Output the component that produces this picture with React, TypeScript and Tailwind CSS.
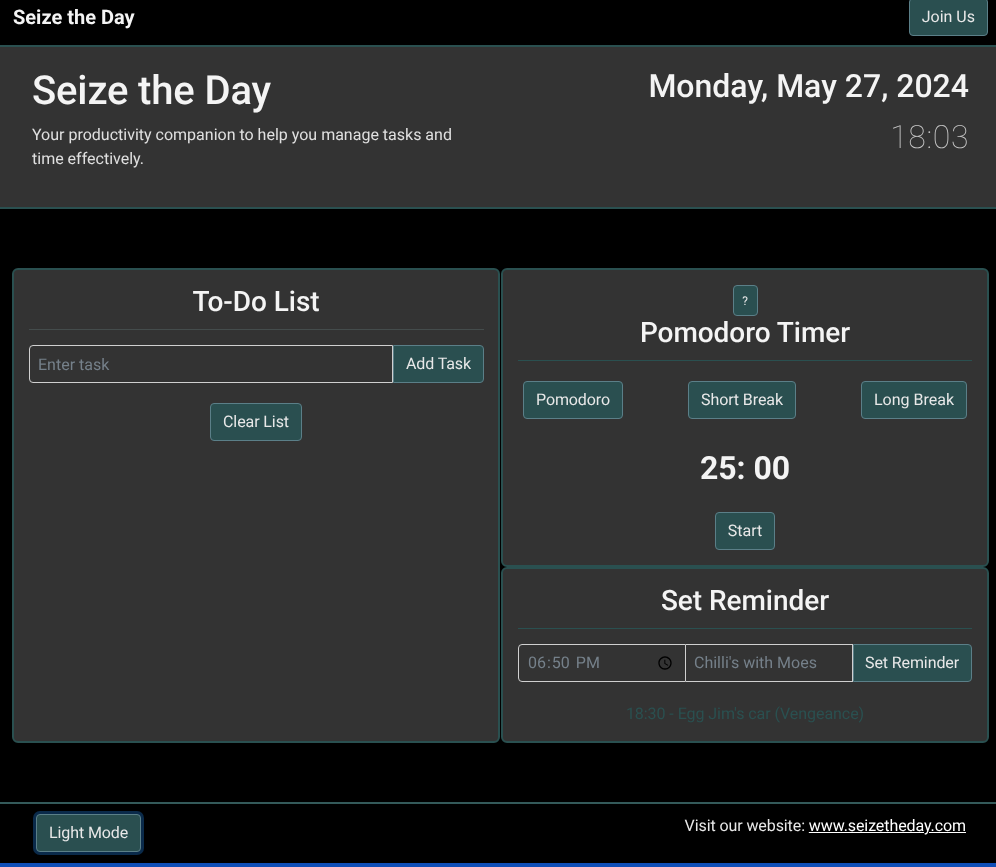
const btnCore =
  'h-[38px] shrink-0 whitespace-nowrap rounded-[4px] border border-[#5b7f88] bg-[#2a4f50] text-base leading-6 text-[#e8e8e8] antialiased [text-rendering:geometricPrecision]'
const btnBase = `${btnCore} px-3`
const btn = `${btnBase} tracking-[-0.1px]`
const field =
  'h-[38px] min-w-0 border border-[#d0d0d0] bg-[#333333] px-2 text-base text-[#75808a] outline-none placeholder:text-[#75808a] antialiased [text-rendering:geometricPrecision]'
const card = 'rounded-[6px] border-2 border-[#2a5050] bg-[#333333] px-[15px]'
const title = 'text-center text-[28px] leading-[34px] font-medium tracking-[-0.05px] text-[#f4f4f4]'

export default function App() {
  return (
    <div className="flex h-[867px] flex-col overflow-hidden bg-black font-['Roboto',sans-serif] text-[#e8e8e8] antialiased will-change-transform [text-rendering:geometricPrecision]">
      <nav className="flex h-[45px] shrink-0 items-start justify-between pr-2 pl-[13px]">
        <span className="mt-[5px] text-xl leading-6 font-bold text-[#f4f4f4]">Seize the Day</span>
        <button className={`${btnBase} -mt-[2px]`}>Join Us</button>
      </nav>

      <header className="flex h-[164px] shrink-0 justify-between border-y-2 border-[#2a5050] bg-[#333333] pr-[27px] pl-8">
        <div className="w-[440px]">
          <h1 className="mt-5 text-[40px] leading-[48px] font-medium tracking-[-0.15px] text-[#f4f4f4]">Seize the Day</h1>
          <p className="mt-2 text-base leading-6 text-[#e0e0e0]">
            Your productivity companion to help you manage tasks and time effectively.
          </p>
        </div>
        <div className="text-right">
          <div className="mt-[19px] text-[32px] leading-[40px] font-medium text-[#f4f4f4]">Monday, May 27, 2024</div>
          <div className="mt-[11px] text-[32px] leading-[40px] font-thin tracking-[0.6px] text-[#c8c8c8]">18:03</div>
        </div>
      </header>

      <main className="mt-[59px] grid h-[475px] shrink-0 grid-cols-2 gap-x-px pr-[7px] pl-3">
        <section className={card}>
          <h2 className={`${title} mt-[15px]`}>To-Do List</h2>
          <hr className="-mr-px mt-[10px] border-[#444c4c]" />
          <div className="-mr-px mt-[15px] flex">
            <input className={`${field} flex-1 rounded-l-[4px]`} placeholder="Enter task" />
            <button className={`${btn} rounded-l-none`}>Add Task</button>
          </div>
          <div className="mt-5 flex justify-center">
            <button className={btn}>Clear List</button>
          </div>
        </section>

        <div className="flex flex-col">
          <section className={`${card} h-[299px] shrink-0`}>
            <div className="mt-[15px] flex justify-center">
              <button className="h-[31px] w-[25px] rounded-[4px] border border-[#5b7f88] bg-[#2a4f50] text-xs text-[#e8e8e8] antialiased [text-rendering:geometricPrecision]">?</button>
            </div>
            <h2 className={title}>Pomodoro Timer</h2>
            <hr className="mt-[10px] border-[#2a5050]" />
            <div className="mx-[5px] mt-5 flex justify-between">
              <button className={btn}>Pomodoro</button>
              <button className={btn}>Short Break</button>
              <button className={btnBase}>Long Break</button>
            </div>
            <div className="mt-[30px] text-center text-[32px] leading-[38px] font-bold tracking-[-0.1px] text-[#f4f4f4]">25: 00</div>
            <div className="mt-[25px] flex justify-center">
              <button className={btnBase}>Start</button>
            </div>
          </section>

          <section className={`${card} flex-1`}>
            <h2 className={`${title} mt-[15px]`}>Set Reminder</h2>
            <hr className="mt-[10px] border-[#2a5050]" />
            <div className="mt-[15px] flex">
              <input
                type="time"
                defaultValue="18:50"
                className={`${field} w-[168px] rounded-l-[4px] [&::-webkit-datetime-edit-ampm-field]:ml-[2px]`}
              />
              <input className={`${field} w-[167px] border-l-0 pb-[2px]`} placeholder="Chilli's with Moes" />
              <button className={`${btnCore} min-w-0 flex-1 rounded-l-none pl-[11px] text-left tracking-[-0.1px]`}>Set Reminder</button>
            </div>
            <p className="mt-5 text-center text-base leading-6 tracking-[-0.06px] text-[#2a5050]">18:30 - Egg Jim's car (Vengeance)</p>
          </section>
        </div>
      </main>

      <footer className="mt-[59px] flex h-[61px] shrink-0 items-start justify-between border-t-2 border-[#345a5a] pr-[30px] pl-9">
        <button className={`${btn} mt-[10px] shadow-[0_0_0_3px_#0a2a4a]`}>Light Mode</button>
        <p className="mt-[10px] text-base leading-6 tracking-[-0.09px]">
          Visit our website: <a className="text-white underline">www.seizetheday.com</a>
        </p>
      </footer>
      <div className="h-1 shrink-0 bg-[#0f4fb8]" />
    </div>
  )
}
